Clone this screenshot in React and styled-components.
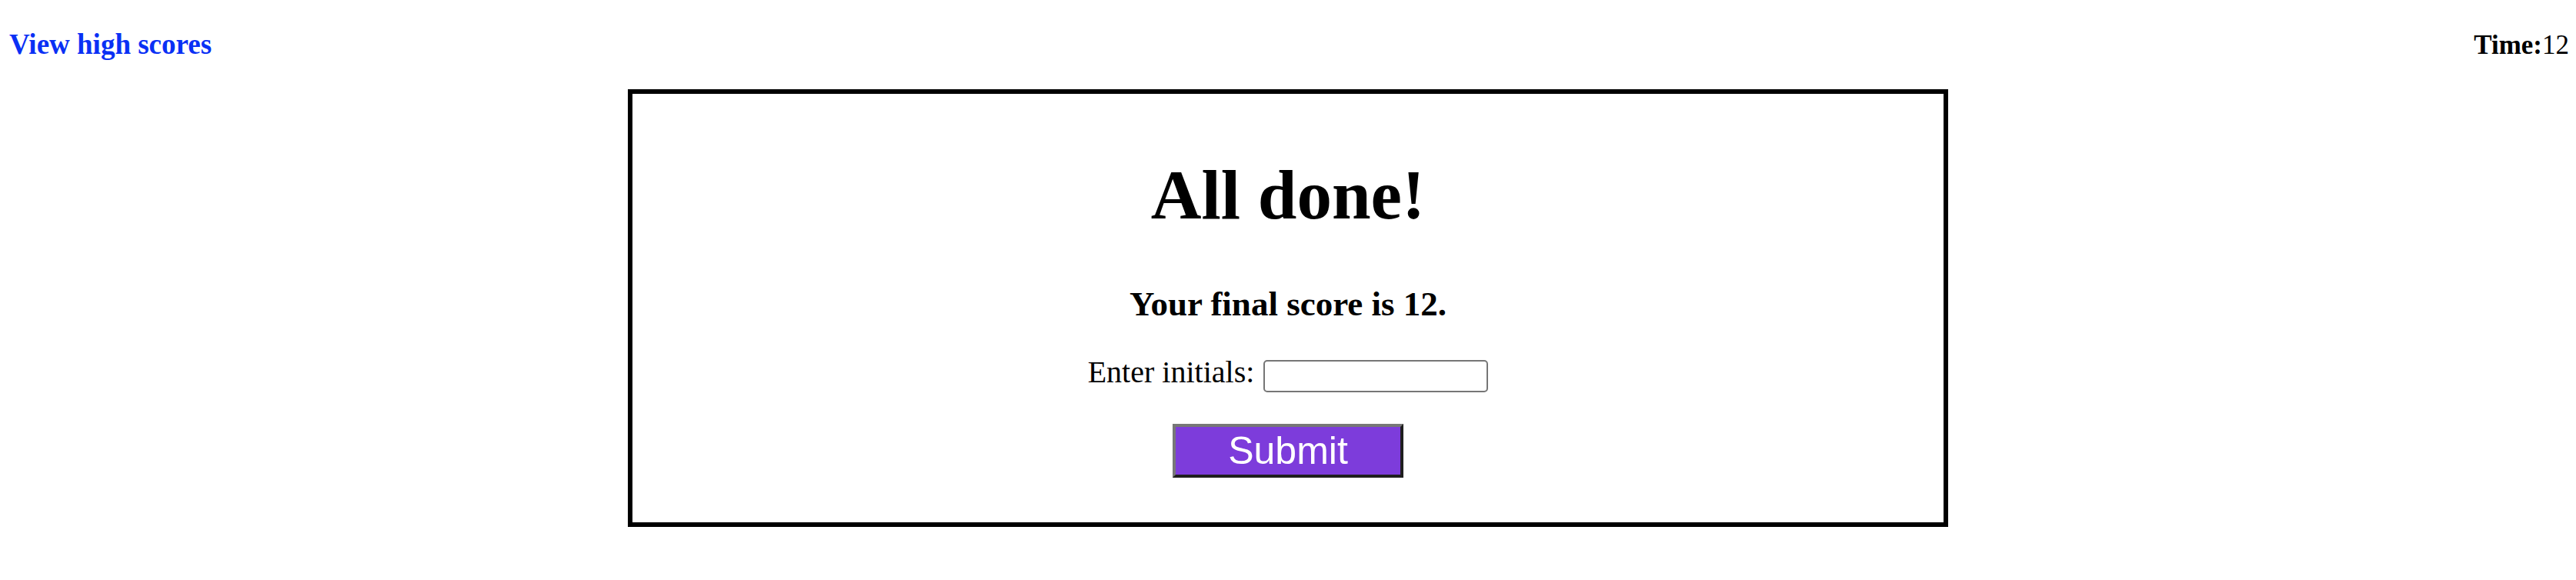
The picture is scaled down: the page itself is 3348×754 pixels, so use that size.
import React from 'react'
import styled, { createGlobalStyle } from 'styled-components'

const GlobalStyle = createGlobalStyle`
    body {
        margin: 0;
        background: #ffffff;
        font-family: "Liberation Serif", "Times New Roman", serif;
        color: #000000;
    }
`;

function App() {
    return (
        <>
            <GlobalStyle />
            <Header>
                <ScoresLink href="#highscores">View high scores</ScoresLink>
                <Timer>
                    <b>Time:</b>12
                </Timer>
            </Header>
            <Card>
                <Title>All done!</Title>
                <Score>Your final score is 12.</Score>
                <InitialsRow>
                    <label htmlFor="initials">Enter initials:</label>
                    <InitialsInput id="initials" type="text" />
                </InitialsRow>
                <SubmitButton type="button">Submit</SubmitButton>
            </Card>
        </>
    )
}

const Header = styled.header`
    display: flex;
    justify-content: space-between;
    align-items: baseline;
    padding: 36px 9px 0 12px;
    height: 44px;
`;

const ScoresLink = styled.a`
    font-size: 37px;
    line-height: 44px;
    font-weight: bold;
    color: #0a30f5;
    text-decoration: none;
`;

const Timer = styled.div`
    font-size: 35px;
    line-height: 44px;
    b {
        font-weight: bold;
    }
`;

const Card = styled.main`
    width: 1704px;
    margin: 36px auto 0;
    border: 6px solid #000000;
    padding: 82px 0 58px;
    display: flex;
    flex-direction: column;
    align-items: center;
`;

const Title = styled.h1`
    margin: 0;
    font-size: 91px;
    line-height: 100px;
    font-weight: bold;
`;

const Score = styled.h2`
    margin: 65px 0 0;
    font-size: 45px;
    line-height: 52px;
    font-weight: bold;
`;

const InitialsRow = styled.div`
    margin-top: 39px;
    height: 50px;
    display: flex;
    align-items: flex-start;
    font-size: 40px;
    line-height: 48px;
`;

const InitialsInput = styled.input`
    margin: 8px 0 0 12px;
    width: 292px;
    height: 42px;
    box-sizing: border-box;
    border: 2px solid #767676;
    border-radius: 5px;
    background: #ffffff;
    padding: 0 4px;
    font-size: 26px;
`;

const SubmitButton = styled.button`
    margin-top: 41px;
    width: 300px;
    height: 70px;
    box-sizing: border-box;
    padding: 0;
    background: #7d3cdb;
    color: #ffffff;
    font-family: "Liberation Sans", Arial, sans-serif;
    font-size: 50px;
    line-height: 62px;
    border-style: solid;
    border-width: 4px;
    border-color: #777777 #1f1f1f #1f1f1f #777777;
    cursor: pointer;
`;

export default App
